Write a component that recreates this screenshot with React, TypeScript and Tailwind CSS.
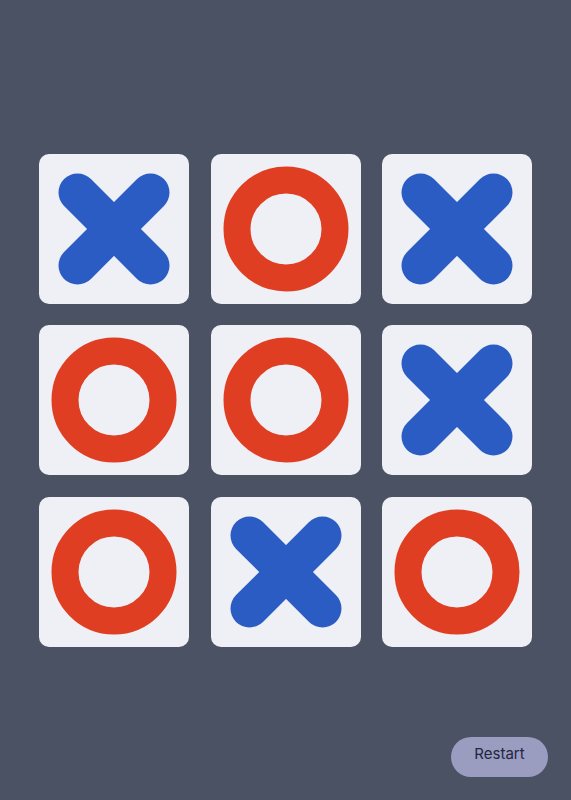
import { useState } from "react";

type Mark = "X" | "O" | null;

const initialBoard: Mark[] = ["X", "O", "X", "O", "O", "X", "O", "X", "O"];

function XMark() {
  return (
    <svg viewBox="0 0 150 150" className="w-full h-full">
      <g stroke="#2a5cc4" strokeWidth={38} strokeLinecap="round">
        <line x1={38.5} y1={38.5} x2={111.5} y2={111.5} />
        <line x1={111.5} y1={38.5} x2={38.5} y2={111.5} />
      </g>
    </svg>
  );
}

function OMark() {
  return (
    <svg viewBox="0 0 150 150" className="w-full h-full">
      <circle cx={75} cy={75} r={49} fill="none" stroke="#e03e22" strokeWidth={27} />
    </svg>
  );
}

export default function App() {
  const [board, setBoard] = useState<Mark[]>(initialBoard);

  return (
    <div
      className="min-h-screen w-full bg-[#4b5263] flex items-center justify-center"
      style={{ fontFamily: "Inter, 'Noto Sans', sans-serif" }}
    >
      <div className="grid grid-cols-[150px_150px_150px] gap-x-[21.5px] gap-y-[21.5px]">
        {board.map((cell, i) => (
          <button
            key={i}
            className="w-[150px] h-[150px] rounded-[10px] bg-[#eef0f5]"
          >
            {cell === "X" && <XMark />}
            {cell === "O" && <OMark />}
          </button>
        ))}
      </div>

      <button
        onClick={() => setBoard(Array(9).fill(null))}
        className="fixed right-[23px] bottom-[23px] w-[97px] h-[40px] pb-[6px] rounded-full bg-[#9a9cc0] text-[#232640] text-[15px]"
      >
        Restart
      </button>
    </div>
  );
}
